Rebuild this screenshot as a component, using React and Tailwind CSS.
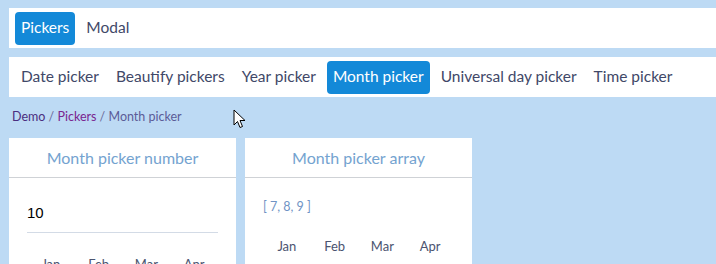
import React from 'react';

const sections = ['Pickers', 'Modal'];
const pickers = ['Date picker', 'Beautify pickers', 'Year picker', 'Month picker', 'Universal day picker', 'Time picker'];
const months = ['Jan', 'Feb', 'Mar', 'Apr'];

function NavBar({ items, active }) {
  return (
    <div className="bg-white h-10 flex items-center gap-[5px] px-[6px]">
      {items.map((item) => (
        <span
          key={item}
          className={`h-[33px] flex items-center px-[6px] rounded-[4px] text-[15.5px] ${
            item === active ? 'bg-[#1389d8] text-white' : 'text-[#414868]'
          }`}
        >
          {item}
        </span>
      ))}
    </div>
  );
}

function MonthRow() {
  return (
    <div className="grid grid-cols-4 text-[13px] text-[#4b5470]">
      {months.map((m) => (
        <span key={m} className="text-center">{m}</span>
      ))}
    </div>
  );
}

function Card({ title, children }) {
  return (
    <div className="bg-white w-[227px] h-[140px] flex flex-col">
      <div className="h-10 shrink-0 flex items-center justify-center border-b border-[#cfd2d6] text-[16px] text-[#74a3d0]">
        {title}
      </div>
      <div className="px-[18px]">{children}</div>
    </div>
  );
}

export default function App() {
  return (
    <div
      className="relative w-[716px] h-[264px] overflow-hidden bg-[#bddaf4] pl-[9px] pt-2"
      style={{ fontFamily: 'Lato, "Liberation Sans", sans-serif' }}
    >
      <NavBar items={sections} active="Pickers" />
      <div className="h-[9px]" />
      <NavBar items={pickers} active="Month picker" />
      <div className="h-[41px] flex items-center pl-[3px] text-[12.5px] text-[#5b5c98] whitespace-pre">
        <span className="text-[#4a2e80]">Demo</span>
        <span className="text-[#6a6a9a]"> / </span>
        <span className="text-[#7a2590]">Pickers</span>
        <span className="text-[#6a6a9a]"> / </span>
        <span>Month picker</span>
      </div>
      <div className="flex gap-[9px]">
        <Card title="Month picker number">
          <div className="pt-[25px] pb-[9px] border-b border-[#d3dbe6] text-[15px] text-black leading-5" style={{ fontFamily: '"Liberation Sans", sans-serif' }}>
            10
          </div>
          <div className="pt-[22px]">
            <MonthRow />
          </div>
        </Card>
        <Card title="Month picker array">
          <div className="pt-[21px] text-[12.5px] text-[#7093c4] leading-4">[ 7, 8, 9 ]</div>
          <div className="pt-[22px]">
            <MonthRow />
          </div>
        </Card>
      </div>
      <svg className="absolute left-[233px] top-[109px]" width="13" height="20" viewBox="0 0 13 20">
        <path d="M1 1 L1 16 L4.5 12.5 L7 18.5 L9.5 17.5 L7 11.5 L12 11.5 Z" fill="white" stroke="black" strokeWidth="1" strokeLinejoin="round" />
      </svg>
    </div>
  );
}
